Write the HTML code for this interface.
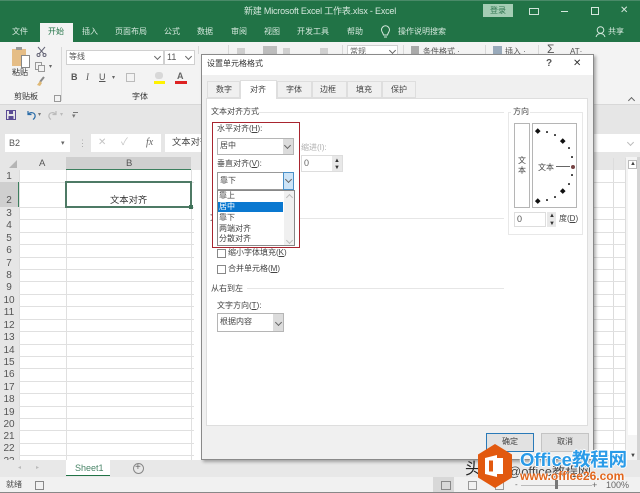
<!DOCTYPE html>
<html><head><meta charset="utf-8">
<style>
html,body{margin:0;padding:0;background:#fff}
#p{position:relative;width:640px;height:493px;overflow:hidden;background:#fff;font-family:"Liberation Sans","Noto Sans CJK SC",sans-serif;font-size:8px;color:#333}
#p div,#p span.t{position:absolute}
.t{white-space:nowrap;line-height:12px}
.w{color:#d5e8dd}
.r{background:#e0e0e0;height:1px;left:19px;width:175px}
.q{background:#e0e0e0;height:1px;left:594px;width:31px}
.rh{left:0;width:18px;text-align:center;font-size:10px;color:#555;line-height:12px}
.d{color:#444}
.cb{width:7px;height:7px;border:1px solid #888;background:#fff}
.dot{background:#333;border-radius:50%;width:1.5px;height:1.5px}
.big{background:#111;width:3.5px;height:3.5px;transform:rotate(45deg)}
.arrow{width:4px;height:4px;border-right:1px solid #666;border-bottom:1px solid #666;transform:rotate(45deg)}
</style></head><body><div id="p">

<!-- title bar -->
<div style="left:0;top:0;width:640px;height:42px;background:#217346"></div>
<div style="left:0;top:0;width:640px;height:1px;background:#4a8a68"></div>
<span class="t w" style="left:244px;top:5px;font-size:9px;letter-spacing:-.2px">新建 Microsoft Excel 工作表.xlsx  -  Excel</span>
<div style="left:483px;top:4px;width:30px;height:13px;background:#a4cdb4"></div>
<span class="t" style="left:490px;top:5px;color:#2f7550">登录</span>
<div style="left:529px;top:8px;width:8px;height:5px;border:1px solid #cfe3d8"></div>
<div style="left:561px;top:11px;width:7px;height:1px;background:#d5e8dd"></div>
<div style="left:591px;top:7px;width:6px;height:6px;border:1px solid #d5e8dd"></div>
<span class="t w" style="left:620px;top:5px;font-size:10px">✕</span>

<!-- tabs -->
<div style="left:40px;top:23px;width:33px;height:19px;background:#f3f3f3"></div>
<span class="t w" style="left:12px;top:26px">文件</span>
<span class="t" style="left:48px;top:26px;color:#217346">开始</span>
<span class="t w" style="left:82px;top:26px">插入</span>
<span class="t w" style="left:115px;top:26px">页面布局</span>
<span class="t w" style="left:164px;top:26px">公式</span>
<span class="t w" style="left:197px;top:26px">数据</span>
<span class="t w" style="left:231px;top:26px">审阅</span>
<span class="t w" style="left:264px;top:26px">视图</span>
<span class="t w" style="left:297px;top:26px">开发工具</span>
<span class="t w" style="left:347px;top:26px">帮助</span>
<svg style="position:absolute;left:380px;top:25px" width="11" height="14" viewBox="0 0 11 14"><path d="M3.500 10C3 7.500 1.500 7 1.500 4.800A4 4 0 0 1 9.500 4.800C9.500 7 8 7.500 7.500 10ZM4 12h3" fill="none" stroke="#d5e8dd" stroke-width="1"/></svg>
<span class="t w" style="left:398px;top:26px">操作说明搜索</span>
<svg style="position:absolute;left:595px;top:25px" width="12" height="14" viewBox="0 0 12 14"><circle cx="5.500" cy="5" r="3.300" fill="none" stroke="#d5e8dd"/><path d="M1 12c1-3 3-3.500 4.500-3.500s3.500.5 4.500 3.500" fill="none" stroke="#d5e8dd"/></svg>
<span class="t w" style="left:608px;top:26px">共享</span>

<!-- ribbon -->
<div style="left:0;top:42px;width:640px;height:62px;background:#f3f3f3"></div>
<div style="left:0;top:104px;width:640px;height:1px;background:#d8d8d8"></div>
<div style="left:0;top:105px;width:640px;height:52px;background:#e6e6e6"></div>
<!-- clipboard -->
<div style="left:12px;top:49px;width:14px;height:17px;background:#e5bd86"></div>
<div style="left:16px;top:47px;width:6px;height:3px;background:#999"></div>
<div style="left:21px;top:55px;width:7px;height:11px;background:#fff;border:1px solid #888"></div>
<span class="t" style="left:12px;top:67px">粘贴</span>
<svg style="position:absolute;left:36px;top:46px" width="11" height="11" viewBox="0 0 11 11"><path d="M2 1l6 7M9 1L3 8" stroke="#667" fill="none"/><circle cx="2.500" cy="9" r="1.500" fill="none" stroke="#667"/><circle cx="8.500" cy="9" r="1.500" fill="none" stroke="#667"/></svg>
<div style="left:35px;top:62px;width:5px;height:6px;border:1px solid #999"></div>
<div style="left:38px;top:65px;width:5px;height:5px;border:1px solid #999;background:#f3f3f3"></div>
<span class="t" style="left:49px;top:61px;font-size:6px;color:#666">▾</span>
<svg style="position:absolute;left:35px;top:76px" width="12" height="11" viewBox="0 0 12 11"><path d="M9 1L5 6" stroke="#888" stroke-width="2"/><path d="M5 5L2 9l3 1 2-3z" fill="#dfb874"/></svg>
<span class="t" style="left:14px;top:91px">剪贴板</span>
<div style="left:54px;top:95px;width:5px;height:5px;border:1px solid #999"></div>
<div style="left:61px;top:47px;width:1px;height:54px;background:#d8d8d8"></div>
<div style="left:66px;top:50px;width:98px;height:15px;background:#fff;border:1px solid #d0d0d0;box-sizing:border-box"></div>
<span class="t" style="left:69px;top:51px;color:#555">等线</span>
<div class="arrow" style="left:155px;top:54px"></div>
<div style="left:164px;top:50px;width:31px;height:15px;background:#fff;border:1px solid #d0d0d0;box-sizing:border-box"></div>
<span class="t" style="left:167px;top:51px;color:#555;font-size:9px">11</span>
<div class="arrow" style="left:186px;top:54px"></div>
<span class="t" style="left:71px;top:71px;font-weight:bold;color:#555;font-size:9px">B</span>
<span class="t" style="left:86px;top:71px;font-style:italic;font-family:'Liberation Serif',serif;color:#555;font-size:9px">I</span>
<span class="t" style="left:99px;top:71px;text-decoration:underline;color:#555;font-size:9px">U</span>
<span class="t" style="left:112px;top:72px;font-size:6px;color:#666">▾</span>
<div style="left:126px;top:73px;width:7px;height:7px;border:1px solid #bbb"></div>
<div style="left:155px;top:72px;width:8px;height:7px;background:#d8d8d8;border-radius:3px"></div>
<div style="left:154px;top:81px;width:11px;height:3px;background:#fff200"></div>
<span class="t" style="left:177px;top:70px;font-weight:bold;color:#666;font-size:9px">A</span>
<div style="left:175px;top:81px;width:12px;height:3px;background:#d22"></div>
<span class="t" style="left:132px;top:91px">字体</span>
<!-- ribbon behind dialog top -->
<div style="left:198px;top:46px;width:1px;height:8px;background:#d8d8d8"></div>
<div style="left:228px;top:45px;width:1px;height:9px;background:#d8d8d8"></div>
<div style="left:237px;top:48px;width:8px;height:6px;background:#cfcfcf"></div>
<div style="left:263px;top:46px;width:14px;height:8px;background:#bdbdbd"></div>
<div style="left:283px;top:48px;width:7px;height:6px;background:#d0d0d0"></div>
<div style="left:320px;top:48px;width:8px;height:6px;background:#d0d0d0"></div>
<div style="left:342px;top:45px;width:1px;height:9px;background:#d8d8d8"></div>
<div style="left:347px;top:45px;width:51px;height:9px;background:#fff;border:1px solid #d0d0d0;border-bottom:0;box-sizing:border-box"></div>
<span class="t" style="left:350px;top:46px;color:#666;height:8px;overflow:hidden">常规</span>
<div class="arrow" style="left:390px;top:48px"></div>
<div style="left:403px;top:45px;width:1px;height:9px;background:#d8d8d8"></div>
<div style="left:411px;top:46px;width:8px;height:8px;background:#aaa"></div>
<span class="t" style="left:423px;top:46px;color:#555;height:8px;overflow:hidden">条件格式 ·</span>
<div style="left:485px;top:45px;width:1px;height:9px;background:#d8d8d8"></div>
<div style="left:493px;top:46px;width:9px;height:8px;background:#9ab"></div>
<span class="t" style="left:505px;top:46px;color:#555;height:8px;overflow:hidden">插入  ·</span>
<div style="left:538px;top:45px;width:1px;height:9px;background:#d8d8d8"></div>
<span class="t" style="left:547px;top:43px;font-size:12px;color:#555;height:11px;overflow:hidden">Σ</span>
<span class="t" style="left:570px;top:46px;color:#555;height:8px;overflow:hidden">AT·</span>
<div style="left:629px;top:98px;width:4px;height:4px;border-left:1px solid #666;border-top:1px solid #666;transform:rotate(45deg)"></div>

<!-- qat -->
<svg style="position:absolute;left:6px;top:110px" width="11" height="11" viewBox="0 0 11 11"><rect x=".5" y=".5" width="9" height="9" fill="none" stroke="#5b4c95"/><rect x="3" y="1" width="4" height="3" fill="#5b4c95"/><rect x="2.500" y="6" width="5" height="3.500" fill="#5b4c95"/></svg>
<svg style="position:absolute;left:25px;top:109px" width="12" height="12" viewBox="0 0 12 12"><path d="M3 2v3.500h3.500M3.200 5.300C5 3 9 3 10 6c.5 2-.5 3.500-2 4.500" fill="none" stroke="#2a6ca8" stroke-width="1.200"/></svg>
<span class="t" style="left:38px;top:109px;font-size:6px;color:#777">▾</span>
<svg style="position:absolute;left:47px;top:109px" width="12" height="12" viewBox="0 0 12 12"><path d="M9 2v3.500H5.500M8.800 5.300C7 3 3 3 2 6c-.5 2 .5 3.500 2 4.500" fill="none" stroke="#bbb" stroke-width="1.200"/></svg>
<span class="t" style="left:60px;top:109px;font-size:6px;color:#bbb">▾</span>
<div style="left:73px;top:112px;width:5px;height:1px;background:#777"></div>
<span class="t" style="left:72px;top:111px;font-size:7px;color:#777">▾</span>

<!-- formula bar -->
<div style="left:5px;top:134px;width:65px;height:18px;background:#fff"></div>
<span class="t" style="left:9px;top:137px;font-size:9px;color:#555">B2</span>
<span class="t" style="left:61px;top:138px;font-size:7px;color:#666">▾</span>
<span class="t" style="left:78px;top:137px;font-size:9px;color:#aaa">⋮</span>
<div style="left:91px;top:134px;width:70px;height:18px;background:#fff"></div>
<span class="t" style="left:98px;top:137px;color:#c4c4c4;font-size:10px">✕</span>
<span class="t" style="left:121px;top:137px;color:#c4c4c4;font-size:10px">✓</span>
<span class="t" style="left:146px;top:137px;color:#666;font-style:italic;font-family:'Liberation Serif',serif;font-size:10px">fx</span>
<div style="left:165px;top:134px;width:475px;height:18px;background:#fff"></div>
<span class="t" style="left:172px;top:136px;font-size:9.300px;color:#444">文本对齐</span>
<div class="arrow" style="left:628px;top:140px;border-color:#bbb"></div>

<!-- grid -->
<div style="left:0;top:157px;width:640px;height:13px;background:#e6e6e6"></div>
<div style="left:0;top:170px;width:19px;height:290px;background:#e6e6e6"></div>
<div style="left:66px;top:157px;width:125px;height:13px;background:#cfcfcf;border-bottom:1px solid #3c7f5e;box-sizing:border-box"></div>
<div style="left:0;top:182px;width:19px;height:25px;background:#cfcfcf"></div>
<div style="left:18px;top:182px;width:1px;height:25px;background:#3c7f5e"></div>
<svg style="position:absolute;left:9px;top:160px" width="8" height="8"><path d="M8 0V8H0z" fill="#b5b5b5"/></svg>
<span class="t" style="left:39px;top:158px;font-size:9.500px;color:#555">A</span>
<span class="t" style="left:126px;top:158px;font-size:9.500px;color:#555">B</span>
<div style="left:19px;top:170px;width:1px;height:290px;background:#dcdcdc"></div>
<div style="left:66px;top:170px;width:1px;height:290px;background:#e0e0e0"></div>
<div style="left:191px;top:170px;width:1px;height:290px;background:#e0e0e0"></div>
<div class="r" style="top:182px"></div><div class="r" style="top:207px"></div>
<div class="r" style="top:219px"></div><div class="r" style="top:232px"></div>
<div class="r" style="top:244px"></div><div class="r" style="top:257px"></div>
<div class="r" style="top:269px"></div><div class="r" style="top:281px"></div>
<div class="r" style="top:294px"></div><div class="r" style="top:306px"></div>
<div class="r" style="top:319px"></div><div class="r" style="top:331px"></div>
<div class="r" style="top:344px"></div><div class="r" style="top:356px"></div>
<div class="r" style="top:368px"></div><div class="r" style="top:381px"></div>
<div class="r" style="top:393px"></div><div class="r" style="top:406px"></div>
<div class="r" style="top:418px"></div><div class="r" style="top:430px"></div>
<div class="r" style="top:443px"></div><div class="r" style="top:455px"></div>
<!-- right of dialog -->
<div style="left:613px;top:158px;width:1px;height:302px;background:#dcdcdc"></div>
<div style="left:625px;top:158px;width:1px;height:302px;background:#dcdcdc"></div>
<div class="q" style="top:182px"></div><div class="q" style="top:207px"></div>
<div class="q" style="top:219px"></div><div class="q" style="top:232px"></div>
<div class="q" style="top:244px"></div><div class="q" style="top:257px"></div>
<div class="q" style="top:269px"></div><div class="q" style="top:281px"></div>
<div class="q" style="top:294px"></div><div class="q" style="top:306px"></div>
<div class="q" style="top:319px"></div><div class="q" style="top:331px"></div>
<div class="q" style="top:344px"></div><div class="q" style="top:356px"></div>
<div class="q" style="top:368px"></div><div class="q" style="top:381px"></div>
<div class="q" style="top:393px"></div><div class="q" style="top:406px"></div>
<div class="q" style="top:418px"></div><div class="q" style="top:430px"></div>
<div class="q" style="top:443px"></div><div class="q" style="top:455px"></div>
<div style="left:626px;top:157px;width:14px;height:303px;background:#f4f4f4"></div>
<div style="left:628px;top:160px;width:9px;height:9px;background:#fff;border:1px solid #bbb;box-sizing:border-box"></div>
<span class="t" style="left:630px;top:158px;font-size:6px;color:#444">▲</span>
<div style="left:628px;top:169px;width:9px;height:266px;background:#fff"></div>
<div style="left:637px;top:157px;width:3px;height:303px;background:#d4d4d4"></div>
<span class="t" style="left:630px;top:450px;font-size:6px;color:#444">▼</span>

<div class="rh" style="top:171px">1</div><div class="rh" style="top:195px">2</div>
<div class="rh" style="top:208px">3</div><div class="rh" style="top:220px">4</div>
<div class="rh" style="top:233px">5</div><div class="rh" style="top:245px">6</div>
<div class="rh" style="top:258px">7</div><div class="rh" style="top:270px">8</div>
<div class="rh" style="top:282px">9</div><div class="rh" style="top:295px">10</div>
<div class="rh" style="top:307px">11</div><div class="rh" style="top:320px">12</div>
<div class="rh" style="top:332px">13</div><div class="rh" style="top:345px">14</div>
<div class="rh" style="top:357px">15</div><div class="rh" style="top:369px">16</div>
<div class="rh" style="top:382px">17</div><div class="rh" style="top:394px">18</div>
<div class="rh" style="top:407px">19</div><div class="rh" style="top:419px">20</div>
<div class="rh" style="top:431px">21</div><div class="rh" style="top:443px">22</div>
<div class="rh" style="top:456px">23</div>
<div style="left:65px;top:181px;width:127px;height:27px;border:2px solid #4e7a65;box-sizing:border-box;background:#fff"></div>
<div style="left:188.500px;top:205px;width:4px;height:4px;background:#3f7259"></div>
<span class="t" style="left:110px;top:194px;font-size:9.300px;color:#333">文本对齐</span>

<!-- sheet tab bar -->
<div style="left:0;top:460px;width:640px;height:17px;background:#e8e8e8"></div>
<div style="left:66px;top:460px;width:44px;height:16px;background:#fff;border-bottom:1px solid #217346;box-sizing:border-box"></div>
<span class="t" style="left:75px;top:462px;font-size:9px;color:#4a8568">Sheet1</span>
<div style="left:133px;top:463px;width:9px;height:9px;border:1px solid #888;border-radius:50%"></div>
<span class="t" style="left:135px;top:462px;font-size:10px;color:#666">+</span>
<span class="t" style="left:18px;top:462px;font-size:6px;color:#bbb">◂</span>
<span class="t" style="left:36px;top:462px;font-size:6px;color:#bbb">▸</span>

<!-- status bar -->
<div style="left:0;top:477px;width:640px;height:16px;background:#f1f1f1"></div>
<div style="left:0;top:492px;width:640px;height:1px;background:#888"></div>
<span class="t" style="left:6px;top:479px;color:#444">就绪</span>
<div style="left:35px;top:481px;width:7px;height:7px;border:1px solid #888"></div>
<div style="left:433px;top:477px;width:21px;height:15px;background:#d8d8d8"></div>
<div style="left:441px;top:481px;width:8px;height:7px;border:1px solid #888"></div>
<div style="left:468px;top:481px;width:7px;height:7px;border:1px solid #999"></div>
<div style="left:495px;top:481px;width:7px;height:7px;border:1px solid #999"></div>
<span class="t" style="left:515px;top:479px;color:#666">-</span>
<div style="left:521px;top:485px;width:71px;height:1px;background:#bbb"></div>
<div style="left:555px;top:480px;width:3px;height:9px;background:#777"></div>
<span class="t" style="left:592px;top:479px;color:#666;font-size:9px">+</span>
<span class="t" style="left:606px;top:479px;font-size:9px;color:#666">100%</span>

<!-- dialog -->
<div style="left:201px;top:54px;width:393px;height:406px;background:#f0f0f0;border:1px solid #8a8a8a;box-sizing:border-box;box-shadow:2px 2px 3px rgba(0,0,0,.3)"></div>
<div style="left:202px;top:55px;width:391px;height:20px;background:#fff"></div>
<span class="t" style="left:207px;top:58px;color:#333">设置单元格格式</span>
<span class="t" style="left:546px;top:58px;font-size:10px;font-weight:bold;color:#555">?</span>
<span class="t" style="left:573px;top:58px;font-size:10px;color:#333">✕</span>
<div style="left:206px;top:98px;width:382px;height:328px;background:#fff;border:1px solid #dedede;box-sizing:border-box"></div>
<div style="left:207px;top:81px;width:33px;height:17px;background:#f0f0f0;border:1px solid #dedede;box-sizing:border-box"></div>
<div style="left:240px;top:80px;width:37px;height:19px;background:#fff;border:1px solid #dedede;border-bottom:0;box-sizing:border-box"></div>
<div style="left:277px;top:81px;width:35px;height:17px;border:1px solid #dedede;box-sizing:border-box"></div>
<div style="left:312px;top:81px;width:35px;height:17px;border:1px solid #dedede;box-sizing:border-box"></div>
<div style="left:347px;top:81px;width:35px;height:17px;border:1px solid #dedede;box-sizing:border-box"></div>
<div style="left:382px;top:81px;width:34px;height:17px;border:1px solid #dedede;box-sizing:border-box"></div>
<span class="t d" style="left:216px;top:84px">数字</span>
<span class="t d" style="left:250px;top:84px">对齐</span>
<span class="t d" style="left:286px;top:84px">字体</span>
<span class="t d" style="left:320px;top:84px">边框</span>
<span class="t d" style="left:356px;top:84px">填充</span>
<span class="t d" style="left:391px;top:84px">保护</span>

<span class="t d" style="left:211px;top:106px">文本对齐方式</span>
<div style="left:259px;top:112px;width:245px;height:1px;background:#e6e6e6"></div>
<span class="t d" style="left:217px;top:123px">水平对齐(<u>H</u>):</span>
<div style="left:217px;top:138px;width:77px;height:17px;background:#fff;border:1px solid #b5b5b5;box-sizing:border-box"></div>
<span class="t d" style="left:220px;top:140px">居中</span>
<div style="left:283px;top:139px;width:10px;height:15px;background:#dcdcdc"></div>
<div class="arrow" style="left:285px;top:143px"></div>
<span class="t" style="left:301px;top:142px;color:#b0b0b0">缩进(I):</span>
<div style="left:301px;top:155px;width:42px;height:17px;background:#fff;border:1px solid #ddd;box-sizing:border-box"></div>
<span class="t" style="left:304px;top:157px;color:#666;font-size:9px">0</span>
<div style="left:332px;top:156px;width:10px;height:15px;background:#e8e8e8"></div>
<span class="t" style="left:334px;top:155px;font-size:6px;color:#333">▲</span>
<span class="t" style="left:334px;top:162px;font-size:6px;color:#333">▼</span>
<span class="t d" style="left:217px;top:158px">垂直对齐(<u>V</u>):</span>
<div style="left:217px;top:172px;width:77px;height:18px;background:#fff;border:1px solid #999;box-sizing:border-box"></div>
<span class="t d" style="left:220px;top:175px">靠下</span>
<div style="left:283px;top:172px;width:11px;height:18px;background:#cde4f7;border:1px solid #4a90c8;box-sizing:border-box"></div>
<div class="arrow" style="left:286px;top:177px"></div>
<div style="left:217px;top:190px;width:78px;height:56px;background:#fff;border:1px solid #888;box-sizing:border-box"></div>
<div style="left:218px;top:202px;width:65px;height:10px;background:#0a78d0"></div>
<div style="left:284px;top:191px;width:10px;height:54px;background:#f0f0f0"></div>
<div class="arrow" style="left:287px;top:195px;transform:rotate(225deg);border-color:#bbb"></div>
<div class="arrow" style="left:287px;top:238px;border-color:#bbb"></div>
<span class="t d" style="left:219px;top:190px">靠上</span>
<span class="t" style="left:219px;top:201px;color:#fff">居中</span>
<span class="t d" style="left:219px;top:212px">靠下</span>
<span class="t d" style="left:219px;top:223px">两端对齐</span>
<span class="t d" style="left:219px;top:233px">分散对齐</span>
<div style="left:212px;top:122px;width:88px;height:126px;border:1.500px solid #a8252f;box-sizing:border-box"></div>
<span class="t d" style="left:210px;top:212px;width:2px;overflow:hidden">文</span>
<div style="left:300px;top:218px;width:204px;height:1px;background:#e6e6e6"></div>

<div class="cb" style="left:217px;top:249px"></div>
<span class="t d" style="left:228px;top:247px">缩小字体填充(<u>K</u>)</span>
<div class="cb" style="left:217px;top:265px"></div>
<span class="t d" style="left:228px;top:263px">合并单元格(<u>M</u>)</span>
<span class="t d" style="left:211px;top:283px">从右到左</span>
<div style="left:247px;top:288px;width:257px;height:1px;background:#e6e6e6"></div>
<span class="t d" style="left:217px;top:300px">文字方向(<u>T</u>):</span>
<div style="left:217px;top:313px;width:67px;height:19px;background:#fff;border:1px solid #b5b5b5;box-sizing:border-box"></div>
<span class="t d" style="left:220px;top:316px">根据内容</span>
<div style="left:273px;top:314px;width:10px;height:17px;background:#dcdcdc"></div>
<div class="arrow" style="left:276px;top:320px"></div>

<!-- orientation -->
<div style="left:508px;top:112px;width:75px;height:123px;border:1px solid #e8e8e8;box-sizing:border-box"></div>
<div style="left:511px;top:106px;width:19px;height:13px;background:#fff"></div>
<span class="t d" style="left:513px;top:106px">方向</span>
<div style="left:514px;top:123px;width:16px;height:85px;background:#fff;border:1px solid #b5b5b5;box-sizing:border-box"></div>
<span class="t d" style="left:518px;top:156px;width:8px;white-space:normal;line-height:10px">文本</span>
<div style="left:532px;top:123px;width:45px;height:85px;background:#fff;border:1px solid #b5b5b5;box-sizing:border-box"></div>
<span class="t d" style="left:538px;top:162px">文本</span>
<div style="left:556px;top:166px;width:14px;height:1px;background:#666"></div>
<div style="left:571px;top:164.500px;width:4px;height:4px;border-radius:50%;background:#744"></div>
<div class="big" style="left:536px;top:129px"></div>
<div class="big" style="left:561px;top:139px"></div>
<div class="big" style="left:561px;top:189px"></div>
<div class="big" style="left:536px;top:199px"></div>
<div class="dot" style="left:546px;top:131px"></div>
<div class="dot" style="left:554px;top:134px"></div>
<div class="dot" style="left:568px;top:147px"></div>
<div class="dot" style="left:571px;top:156px"></div>
<div class="dot" style="left:571px;top:174px"></div>
<div class="dot" style="left:568px;top:183px"></div>
<div class="dot" style="left:554px;top:196px"></div>
<div class="dot" style="left:546px;top:199px"></div>
<div style="left:514px;top:212px;width:32px;height:15px;background:#fff;border:1px solid #ddd;box-sizing:border-box"></div>
<span class="t" style="left:517px;top:213px;color:#555;font-size:9px">0</span>
<div style="left:547px;top:212px;width:9px;height:15px;background:#e8e8e8"></div>
<span class="t" style="left:549px;top:210px;font-size:6px;color:#333">▲</span>
<span class="t" style="left:549px;top:218px;font-size:6px;color:#333">▼</span>
<span class="t d" style="left:559px;top:213px">度(<u>D</u>)</span>

<!-- buttons -->
<div style="left:486px;top:433px;width:48px;height:19px;background:#e2e2e2;border:1px solid #2a7ab8;box-sizing:border-box"></div>
<span class="t d" style="left:502px;top:436px">确定</span>
<div style="left:541px;top:433px;width:48px;height:19px;background:#e1e1e1;border:1px solid #c4c4c4;box-sizing:border-box"></div>
<span class="t d" style="left:557px;top:436px">取消</span>

<!-- watermarks -->
<span class="t" style="left:465px;top:461px;font-size:16px;line-height:18px;color:#222">头条</span>
<span class="t" style="left:508px;top:465px;font-size:13px;line-height:14px;color:#444;text-shadow:0 0 1px #fff">@office教程网</span>
<svg style="position:absolute;left:477px;top:444px" width="36" height="44" viewBox="0 0 36 44"><path d="M18 0L35 10.500V33.500L18 44L1 33.500V10.500Z" fill="#e2590f"/><path d="M8 14L20 11V33L8 30Z" fill="#fff"/><rect x="12" y="16.500" width="4" height="11" fill="#e2590f"/><rect x="20" y="14" width="6" height="16" fill="#fff"/></svg>
<span class="t" style="left:520px;top:450px;font-size:18.500px;line-height:20px;font-weight:bold;color:#2a9be8;letter-spacing:-.1px;text-shadow:1px 0 0 #fff,-1px 0 0 #fff,0 1px 0 #fff,0 -1px 0 #fff">Office教程网</span>
<span class="t" style="left:520px;top:470px;font-size:12px;line-height:12px;font-weight:bold;color:#e2661c;text-shadow:1px 0 0 rgba(255,255,255,.7),-1px 0 0 rgba(255,255,255,.7)">www.office26.com</span>

</div></body></html>
